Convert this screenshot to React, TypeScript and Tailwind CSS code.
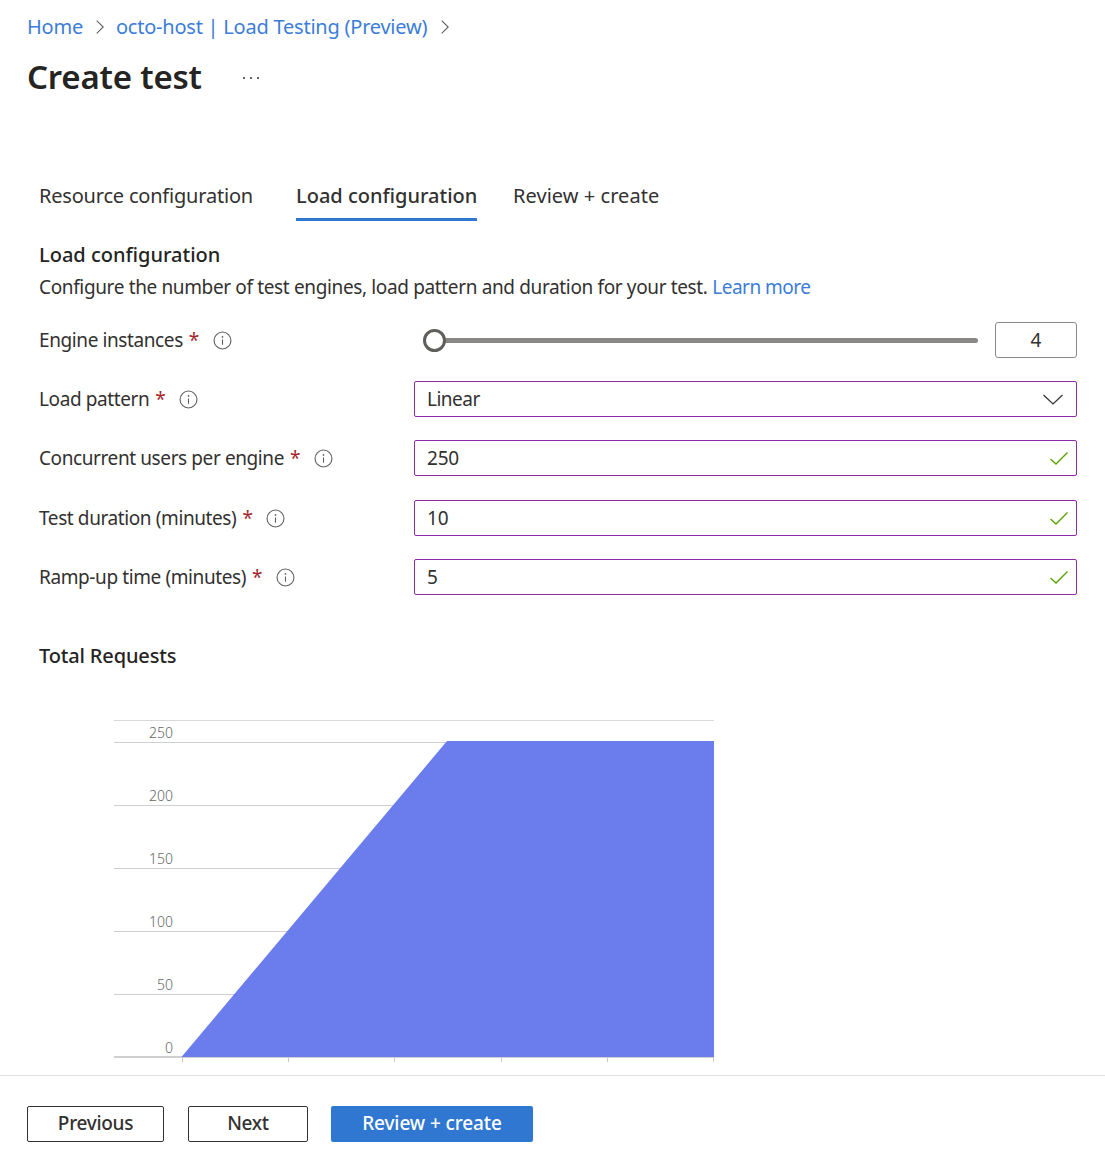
const font = { fontFamily: "'Noto Sans', 'Open Sans', sans-serif" };

const InfoIcon = () => (
  <svg width="19" height="19" viewBox="0 0 18 18" fill="none" className="shrink-0">
    <circle cx="9" cy="9" r="8" stroke="#605e5c" strokeWidth="1.05" />
    <path d="M9 8v5" stroke="#605e5c" strokeWidth="1.05" />
    <circle cx="9" cy="5.6" r="0.8" fill="#605e5c" />
  </svg>
);

const Crumb = () => (
  <svg width="8" height="14" viewBox="0 0 8 14" fill="none" className="shrink-0">
    <path d="M0.7 0.7 L7.2 7 L0.7 13.3" stroke="#605e5c" strokeWidth="1.1" />
  </svg>
);

const Tick = () => (
  <svg width="18" height="13" viewBox="0 0 18 13" fill="none" className="shrink-0">
    <path d="M0.5 7 L6 12 L17.5 0.5" stroke="#57a300" strokeWidth="1.4" />
  </svg>
);

const Label = ({ text }: { text: string }) => (
  <div className="w-[375px] shrink-0 flex items-center text-[19px] tracking-[-0.4px] text-[#323130]">
    <span>{text}</span>
    <span className="ml-[6px] text-[#a4262c]">*</span>
    <span className="ml-[14px]">
      <InfoIcon />
    </span>
  </div>
);

const ValidInput = ({ value }: { value: string }) => (
  <div className="flex-1 h-[36px] rounded-[2px] border border-[#8e2ba5] flex items-center justify-between pl-[12px] pr-[8px] text-[19px] tracking-[-0.2px] text-[#323130]">
    <span>{value}</span>
    <Tick />
  </div>
);

const ticks = [182, 288, 394, 501, 607, 713];
const gridLines = [
  { y: 742.5, label: "250" },
  { y: 805.5, label: "200" },
  { y: 868.5, label: "150" },
  { y: 931.5, label: "100" },
  { y: 994.5, label: "50" },
  { y: 1057, label: "0" },
];

export default function App() {
  return (
    <div className="w-[1105px] h-[1162px] bg-white flex flex-col overflow-hidden" style={font}>
      <div className="pl-[27px] h-[54px] flex items-center text-[20px] tracking-[-0.23px] text-[#3b7dd8]">
        <span>Home</span>
        <span className="ml-[13px] mr-[12px]">
          <Crumb />
        </span>
        <span>octo-host | Load Testing (Preview)</span>
        <span className="ml-[14px]">
          <Crumb />
        </span>
      </div>

      <div className="pl-[27px] h-[46px] flex items-center text-[#252423]">
        <h1 className="text-[33px] font-semibold tracking-[-0.2px]">Create test</h1>
        <span className="ml-[41px] flex gap-[5px] mt-[2px]">
          <i className="w-[2px] h-[2px] rounded-full bg-[#323130]" />
          <i className="w-[2px] h-[2px] rounded-full bg-[#323130]" />
          <i className="w-[2px] h-[2px] rounded-full bg-[#323130]" />
        </span>
      </div>

      <div className="pl-[39px] pr-[28px] pt-[76px] flex-1 flex flex-col">
        <div className="flex text-[20px] text-[#323130] h-[45px] whitespace-nowrap">
          <div className="w-[257px] pt-[5px] tracking-[-0.2px]">Resource configuration</div>
          <div className="w-[181px] text-center pt-[5px] font-medium border-b-[3px] border-[#2f77d1]">
            Load configuration
          </div>
          <div className="ml-[36px] pt-[5px] tracking-[0.05px]">Review + create</div>
        </div>

        <h2 className="mt-[19px] h-[33px] text-[20px] font-medium text-[#252423]">Load configuration</h2>
        <p className="h-[34px] text-[19px] tracking-[-0.36px] text-[#323130]">
          Configure the number of test engines, load pattern and duration for your test.{" "}
          <span className="text-[#3b7dd8] tracking-[-0.5px]">Learn more</span>
        </p>

        <div className="mt-[15px] flex items-center h-[36px]">
          <Label text="Engine instances" />
          <div className="flex-1 flex items-center relative pl-[12px] pr-[17px]">
            <div className="h-[5px] w-full rounded-full bg-[#8a8886]" />
            <div className="absolute left-[9px] w-[23px] h-[23px] rounded-full border-[3px] border-[#605e5c] bg-white" />
          </div>
          <div className="w-[82px] h-[36px] rounded-[3px] border border-[#8a8886] flex items-center justify-center text-[19px] text-[#323130]">
            4
          </div>
        </div>

        <div className="mt-[23px] flex items-center h-[36px]">
          <Label text="Load pattern" />
          <div className="flex-1 h-[36px] rounded-[2px] border border-[#8e2ba5] flex items-center justify-between pl-[12px] pr-[13px] text-[19px] tracking-[-0.5px] text-[#323130]">
            <span>Linear</span>
            <svg width="20" height="11" viewBox="0 0 20 11" fill="none" className="shrink-0">
              <path d="M0.5 1 L10 10 L19.5 1" stroke="#323130" strokeWidth="1.2" />
            </svg>
          </div>
        </div>

        <div className="mt-[23px] flex items-center h-[36px]">
          <Label text="Concurrent users per engine" />
          <ValidInput value="250" />
        </div>

        <div className="mt-[24px] flex items-center h-[36px]">
          <Label text="Test duration (minutes)" />
          <ValidInput value="10" />
        </div>

        <div className="mt-[23px] flex items-center h-[36px]">
          <Label text="Ramp-up time (minutes)" />
          <ValidInput value="5" />
        </div>

        <h2 className="mt-[46px] text-[20px] font-medium tracking-[-0.15px] text-[#252423] h-[30px]">Total Requests</h2>

        <svg width="1038" height="347" viewBox="39 716 1038 347" className="mt-[45px] block shrink-0" style={font}>
          <line x1="114" x2="714" y1="720.5" y2="720.5" stroke="#d9d9d9" />
          {gridLines.map((g) => (
            <g key={g.label}>
              <line x1="114" x2="714" y1={g.y} y2={g.y} stroke="#cfcfcf" strokeWidth={g.label === "0" ? 2 : 1} />
              <text x="173" y={g.y - 4.5} textAnchor="end" fontSize="14" fontWeight="300" fill="#666">
                {g.label}
              </text>
            </g>
          ))}
          <polygon points="181.5,1057 447,741 714,741 714,1057" fill="#6b7ced" />
          {ticks.map((x) => (
            <line key={x} x1={x + 0.5} x2={x + 0.5} y1="1057" y2="1062" stroke="#c8c8c8" />
          ))}
        </svg>
      </div>

      <div className="h-[87px] shrink-0 border-t border-[#e1dfdd] pl-[27px] pt-[30px] flex text-[19px] tracking-[-0.3px] font-medium">
        <button className="w-[137px] h-[36px] pb-[2px] rounded-[2px] border border-[#323130] text-[#323130]">Previous</button>
        <button className="ml-[24px] w-[120px] h-[36px] pb-[2px] rounded-[2px] border border-[#323130] text-[#323130]">Next</button>
        <button className="ml-[23px] w-[202px] h-[36px] pb-[2px] rounded-[2px] bg-[#2f77d1] text-white tracking-[-0.1px]">Review + create</button>
      </div>
    </div>
  );
}
